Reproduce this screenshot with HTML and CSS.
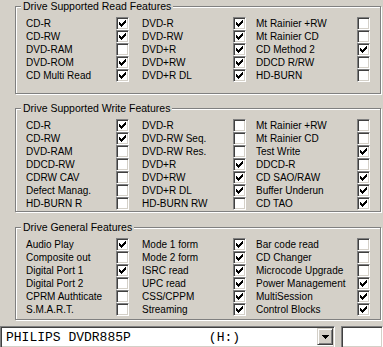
FILE: index.html
```html
<!DOCTYPE html>
<html lang="en">
<head>
    <meta charset="UTF-8">
    <meta name="viewport" content="width=device-width, initial-scale=1.0">
    <title>Drive Features</title>
    <link rel="stylesheet" href="styles.css">
</head>
<body>

<!-- Read features -->
<div class="group group-read">
    <span class="title">Drive Supported Read Features</span>
    <div class="grid">
        <span>CD-R</span><span class="cb on"></span>
        <span>DVD-R</span><span class="cb on"></span>
        <span>Mt Rainier +RW</span><span class="cb"></span>

        <span>CD-RW</span><span class="cb on"></span>
        <span>DVD-RW</span><span class="cb on"></span>
        <span>Mt Rainier CD</span><span class="cb"></span>

        <span>DVD-RAM</span><span class="cb"></span>
        <span>DVD+R</span><span class="cb on"></span>
        <span>CD Method 2</span><span class="cb on"></span>

        <span>DVD-ROM</span><span class="cb on"></span>
        <span>DVD+RW</span><span class="cb on"></span>
        <span>DDCD R/RW</span><span class="cb"></span>

        <span>CD Multi Read</span><span class="cb on"></span>
        <span>DVD+R DL</span><span class="cb on"></span>
        <span>HD-BURN</span><span class="cb"></span>
    </div>
</div>

<!-- Write features -->
<div class="group group-write">
    <span class="title">Drive Supported Write Features</span>
    <div class="grid">
        <span>CD-R</span><span class="cb on"></span>
        <span>DVD-R</span><span class="cb"></span>
        <span>Mt Rainier +RW</span><span class="cb"></span>

        <span>CD-RW</span><span class="cb on"></span>
        <span>DVD-RW Seq.</span><span class="cb"></span>
        <span>Mt Rainier CD</span><span class="cb"></span>

        <span>DVD-RAM</span><span class="cb"></span>
        <span>DVD-RW Res.</span><span class="cb"></span>
        <span>Test Write</span><span class="cb on"></span>

        <span>DDCD-RW</span><span class="cb"></span>
        <span>DVD+R</span><span class="cb on"></span>
        <span>DDCD-R</span><span class="cb"></span>

        <span>CDRW CAV</span><span class="cb"></span>
        <span>DVD+RW</span><span class="cb on"></span>
        <span>CD SAO/RAW</span><span class="cb on"></span>

        <span>Defect Manag.</span><span class="cb"></span>
        <span>DVD+R DL</span><span class="cb on"></span>
        <span>Buffer Underun</span><span class="cb on"></span>

        <span>HD-BURN R</span><span class="cb"></span>
        <span>HD-BURN RW</span><span class="cb"></span>
        <span>CD TAO</span><span class="cb on"></span>
    </div>
</div>

<!-- General features -->
<div class="group group-general">
    <span class="title">Drive General Features</span>
    <div class="grid">
        <span>Audio Play</span><span class="cb on"></span>
        <span>Mode 1 form</span><span class="cb on"></span>
        <span>Bar code read</span><span class="cb"></span>

        <span>Composite out</span><span class="cb"></span>
        <span>Mode 2 form</span><span class="cb on"></span>
        <span>CD Changer</span><span class="cb"></span>

        <span>Digital Port 1</span><span class="cb on"></span>
        <span>ISRC read</span><span class="cb on"></span>
        <span>Microcode Upgrade</span><span class="cb"></span>

        <span>Digital Port 2</span><span class="cb"></span>
        <span>UPC read</span><span class="cb on"></span>
        <span>Power Management</span><span class="cb on"></span>

        <span>CPRM Authticate</span><span class="cb"></span>
        <span>CSS/CPPM</span><span class="cb on"></span>
        <span>MultiSession</span><span class="cb on"></span>

        <span>S.M.A.R.T.</span><span class="cb"></span>
        <span>Streaming</span><span class="cb on"></span>
        <span>Control Blocks</span><span class="cb on"></span>
    </div>
</div>

<!-- Drive selector -->
<div class="bottom-row">
    <div class="combo">
        <span class="combo-text">PHILIPS DVDR885P          (H:)</span>
        <span class="drop-btn">
            <svg width="7" height="4" viewBox="0 0 7 4"><path d="M0 0h7v1h-7z M1 1h5v1h-5z M2 2h3v1h-3z M3 3h1v1h-1z" fill="#000"/></svg>
        </span>
    </div>
    <div class="side-box"></div>
</div>

</body>
</html>
```

FILE: styles.css
```css
body {
    margin: 0;
    padding: 0;
    background-color: #d4d0c8;
    color: #000;
    font-family: 'Liberation Sans', Arial, sans-serif;
    font-size: 10px;
    overflow: hidden;
}

/* etched group box */
.group {
    position: relative;
    box-sizing: border-box;
    width: 366px;
    margin-left: 15px;
    padding: 10px 0 0 10px;
    border: 1px solid #808080;
    box-shadow: inset 1px 1px #fff, 1px 1px #fff;
}
.group-read {
    margin-top: 6px;
    height: 88px;
}
.group-write {
    margin-top: 14px;
    height: 104px;
}
.group-general {
    margin-top: 15px;
    height: 93px;
}
.title {
    position: absolute;
    top: -7px;
    left: 5px;
    padding: 0 2px;
    background-color: #d4d0c8;
    font-size: 10.5px;
    line-height: 13px;
    white-space: nowrap;
}

.grid {
    display: grid;
    grid-template-columns: 90px 26px 91px 23px 101px 13px;
    grid-auto-rows: 13px;
    align-items: center;
}
.grid span {
    line-height: 13px;
    white-space: nowrap;
}

/* classic sunken checkbox */
.grid .cb {
    display: block;
    box-sizing: border-box;
    width: 13px;
    height: 13px;
    border: 1px solid;
    border-color: #808080 #fff #fff #808080;
    box-shadow: inset 1px 1px #404040, inset -1px -1px #d4d0c8;
    background-color: #fff;
}
.cb.on::after {
    content: '';
    display: block;
    width: 1px;
    height: 1px;
    margin: 2px 0 0 2px;
    box-shadow:
        0 2px #000, 0 3px #000, 0 4px #000,
        1px 3px #000, 1px 4px #000, 1px 5px #000,
        2px 4px #000, 2px 5px #000, 2px 6px #000,
        3px 3px #000, 3px 4px #000, 3px 5px #000,
        4px 2px #000, 4px 3px #000, 4px 4px #000,
        5px 1px #000, 5px 2px #000, 5px 3px #000,
        6px 0 #000, 6px 1px #000, 6px 2px #000;
}

/* combo box row */
.bottom-row {
    display: flex;
    gap: 6px;
    margin-top: 6px;
}
.combo, .side-box {
    box-sizing: border-box;
    height: 22px;
    border: 1px solid;
    border-color: #808080 #fff #fff #808080;
    box-shadow: inset 1px 1px #404040, inset -1px -1px #d4d0c8;
    background-color: #fff;
}
.combo {
    display: flex;
    align-items: flex-start;
    width: 335px;
    padding: 1px;
}
.combo-text {
    flex-grow: 1;
    padding: 2px 0 0 4px;
    font-family: 'Liberation Mono', 'Courier New', monospace;
    font-size: 13px;
    line-height: 16px;
    white-space: pre;
}
.drop-btn {
    display: flex;
    align-items: center;
    justify-content: center;
    box-sizing: border-box;
    width: 16px;
    height: 17px;
    border: 1px solid;
    border-color: #d4d0c8 #404040 #404040 #d4d0c8;
    box-shadow: inset 1px 1px #fff, inset -1px -1px #808080;
    background-color: #d4d0c8;
}
.drop-btn svg {
    display: block;
}
.side-box {
    flex-grow: 1;
}
```
